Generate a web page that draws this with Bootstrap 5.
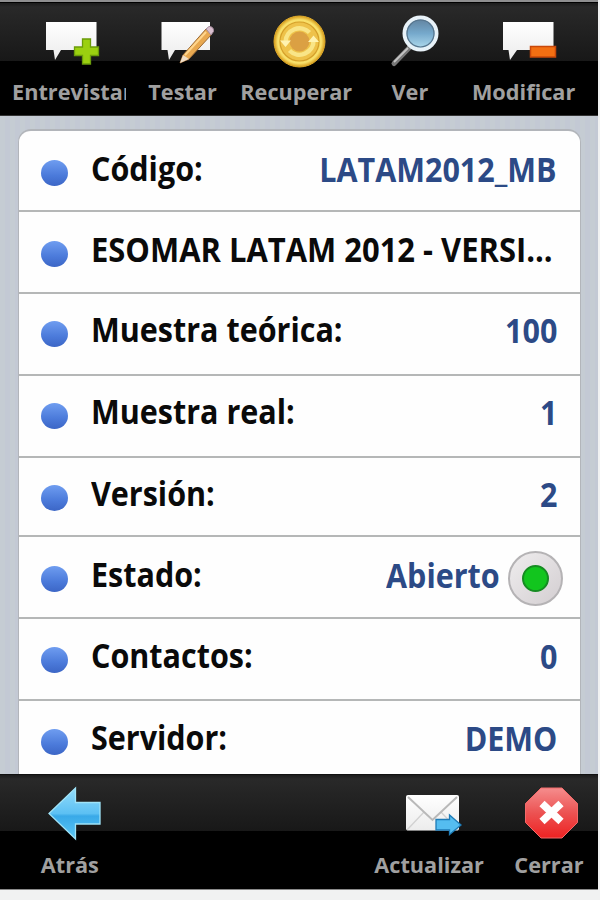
<!DOCTYPE html>
<html lang="es">
<head>
<meta charset="utf-8">
<meta name="viewport" content="width=device-width, initial-scale=1">
<title>LATAM2012_MB</title>
<link href="https://cdn.jsdelivr.net/npm/bootstrap@5.3.0/dist/css/bootstrap.min.css" rel="stylesheet">
<style>
  body { background: #f1f2f2; font-family: "Open Sans", "Noto Sans", sans-serif; font-weight: 700; height: 900px; overflow: hidden; }
  .screen { width: 598px; height: 890px; border-top: 2px solid #8f8f90; border-bottom: 1px solid #8a8a8a; overflow: hidden; }
  .toolbar { flex: none; overflow: hidden; color: #a0a0a0; background: linear-gradient(#1c1c1c, #292929 4px, #181818 var(--split), #000 var(--split)); }
  .toolbar-top { --split: 58px; height: 114px; padding: 8px 0 0 12px; border-top: 1px solid #000; border-bottom: 1px solid #333; }
  .toolbar-bottom { --split: 56px; height: 115px; padding: 6px 0 0 13px; border-top: 1px solid #111; }
  .tool { width: 113.7px; flex: none; overflow: hidden; }
  .tool svg { display: block; width: 114px; height: 60px; flex: none; }
  .tool span { font-size: 21.7px; line-height: 30px; margin-top: 6px; white-space: nowrap; }
  .toolbar-bottom .tool span { margin-top: 9px; }
  .tool-close { width: 98px; }
  .tool-close svg { width: 98px; }
  .first-tool { align-items: flex-start !important; }
  .content { min-height: 0; padding: 13px 17px 0 18px; overflow: hidden; background: repeating-linear-gradient(90deg, #c5ccd3 0 5px, #c3c9d4 5px 10px); }
  .sheet { border: 2px solid #b2b5ba; border-width: 2px 1px 0; border-radius: 13px 13px 0 0; overflow: hidden; background: #fefefe; }
  .field { height: 82px; padding: var(--pt, 20px) 23px 0 22px; border-bottom: 2px solid #b5b7b7; font-size: 34px; line-height: 33px; color: #0a0a0a; white-space: nowrap; }
  .field:nth-child(1) { height: 81px; --pt: 21px; }
  .field:nth-child(2) { --pt: 21px; }
  .field:nth-child(3) { --pt: 19px; }
  .field:nth-child(4) { --pt: 19px; }
  .field:nth-child(5) { height: 79px; --pt: 19px; }
  .field:nth-child(6) { --pt: 21px; }
  .field:nth-child(7) { --pt: 20px; }
  .bullet { width: 27px; height: 26px; margin-top: 8px; border-radius: 50%; background: linear-gradient(#6f9df0, #4b7ada 60%, #3c66c6); flex: none; }
  .field-name, .field-value { display: inline-block; transform: scaleX(.897); }
  .field-name { margin-left: 23px; transform-origin: left; }
  .field-name.long { transform: scaleX(.91); }
  .field-value { transform-origin: right; margin: 1px 0 0 auto; color: #2c4a86; }
  .status-btn { width: 55px; height: 55px; margin: -7px -6px 0 8px; border-radius: 50%; border: 2px solid #b5b3b5; background: linear-gradient(135deg, #efedee, #d3ced1); flex: none; }
  .status-led { width: 27px; height: 27px; border-radius: 50%; border: 2px solid #168c22; background: #12c51e; }
</style>
<script src="https://cdn.jsdelivr.net/npm/bootstrap@5.3.0/dist/js/bootstrap.bundle.min.js"></script>
</head>
<body>
<svg width="0" height="0" class="position-absolute" aria-hidden="true">
  <defs>
    <linearGradient id="paper" x2="0" y2="1"><stop stop-color="#fff"/><stop offset="1" stop-color="#ececec"/></linearGradient>
    <radialGradient id="gold"><stop stop-color="#e9b44a"/><stop offset=".6" stop-color="#f2cb50"/><stop offset=".85" stop-color="#f9e26c"/><stop offset="1" stop-color="#d79a18"/></radialGradient>
    <linearGradient id="lens" x2="0" y2="1"><stop stop-color="#5f7f9b"/><stop offset=".5" stop-color="#76a9cc"/><stop offset="1" stop-color="#b4dff0"/></linearGradient>
    <linearGradient id="sky" x2="0" y2="1"><stop stop-color="#93dcfa"/><stop offset=".5" stop-color="#5cc0f3"/><stop offset=".55" stop-color="#39a9e8"/><stop offset="1" stop-color="#5cc8f6"/></linearGradient>
    <linearGradient id="stop" x2="0" y2="1"><stop stop-color="#f58d8d"/><stop offset=".5" stop-color="#ec5252"/><stop offset="1" stop-color="#ee2222"/></linearGradient>
  </defs>
</svg>
<div class="screen d-flex flex-column">
  <nav class="toolbar toolbar-top d-flex">
    <div class="tool first-tool d-flex flex-column">
      <svg viewBox="0 0 114 60"><path d="M34 11H84.500V39H49L43 49 41.500 39H34Z" fill="url(#paper)"/><path d="M70.500 28h8v8h8v8.500h-8v8.500h-8v-8.500h-8v-8.500h8z" fill="#9bd010" stroke="#6b9c0a" stroke-width="1.300"/></svg>
      <span>Entrevistar</span>
    </div>
    <div class="tool d-flex flex-column align-items-center">
      <svg viewBox="0 0 114 60"><path d="M35.500 11H84V39H49L43 49 41.500 39H35.500Z" fill="url(#paper)"/><path d="M80 18l6 5-23 25-9 4 3-8z" fill="#e8a850" stroke="#9c6a35"/><path d="M59 44L80 21" stroke="#ffd58c" stroke-width="2"/><path d="M57 44l6 4-9 4z" fill="#f1dfc8"/><path d="M80 18l3-2.500q5 0 4.500 5L85 24z" fill="#d9bfcf" stroke="#a48b9c"/></svg>
      <span>Testar</span>
    </div>
    <div class="tool d-flex flex-column align-items-center">
      <svg viewBox="0 0 114 60"><circle cx="60.500" cy="30.500" r="25.500" fill="url(#gold)" stroke="#e0ad2c"/><circle cx="60.500" cy="30.500" r="19.500" fill="#eec24a" stroke="#d5a02a" stroke-width="1.200"/><circle cx="60.500" cy="30.500" r="10" fill="#dba043"/><g fill="none" stroke="#f9e587" stroke-width="4.500"><path d="M46.500 31a14 14 0 0 1 24-9.500M74.500 29a14 14 0 0 1-24 10.500"/></g><path d="M41 29.500h11l-5.500 6.500zM69 31h11l-5.500-6.500z" fill="#fff3b0"/></svg>
      <span>Recuperar</span>
    </div>
    <div class="tool d-flex flex-column align-items-center">
      <svg viewBox="0 0 114 60"><path d="M56 37L41 52.500" stroke="#777" stroke-width="5" stroke-linecap="round"/><path d="M55 37L41 51" stroke="#c4c4c4" stroke-width="1.800"/><circle cx="67.500" cy="22.500" r="16" fill="url(#lens)" stroke="#e8f2f8" stroke-width="4"/><circle cx="67.500" cy="22.500" r="13.500" fill="none" stroke="#56748c" stroke-width="1.200"/></svg>
      <span>Ver</span>
    </div>
    <div class="tool d-flex flex-column align-items-center">
      <svg viewBox="0 0 114 60"><path d="M36 11H86.500V39H50L43 49 41.500 39H36Z" fill="url(#paper)"/><rect x="63.500" y="35.500" width="25" height="10.500" fill="#f36f12" stroke="#c9480a" stroke-width="1.500"/></svg>
      <span>Modificar</span>
    </div>
  </nav>

  <main class="content flex-grow-1">
    <div class="sheet">
      <div class="field d-flex align-items-start"><i class="bullet"></i><span class="field-name">Código:</span><span class="field-value">LATAM2012_MB</span></div>
      <div class="field d-flex align-items-start"><i class="bullet"></i><span class="field-name long">ESOMAR LATAM 2012 - VERSI...</span></div>
      <div class="field d-flex align-items-start"><i class="bullet"></i><span class="field-name">Muestra teórica:</span><span class="field-value">100</span></div>
      <div class="field d-flex align-items-start"><i class="bullet"></i><span class="field-name">Muestra real:</span><span class="field-value">1</span></div>
      <div class="field d-flex align-items-start"><i class="bullet"></i><span class="field-name">Versión:</span><span class="field-value">2</span></div>
      <div class="field d-flex align-items-start"><i class="bullet"></i><span class="field-name">Estado:</span><span class="field-value">Abierto</span><span class="status-btn d-flex align-items-center justify-content-center"><i class="status-led"></i></span></div>
      <div class="field d-flex align-items-start"><i class="bullet"></i><span class="field-name">Contactos:</span><span class="field-value">0</span></div>
      <div class="field d-flex align-items-start"><i class="bullet"></i><span class="field-name">Servidor:</span><span class="field-value">DEMO</span></div>
    </div>
  </main>

  <nav class="toolbar toolbar-bottom d-flex">
    <div class="tool d-flex flex-column align-items-center">
      <svg viewBox="0 0 114 60"><path d="M36 32.500L62.500 7V21.500H87V43H62.500V58Z" fill="url(#sky)" stroke="#9fe3f8" stroke-width="1.300"/></svg>
      <span>Atrás</span>
    </div>
    <div class="tool d-flex flex-column align-items-center ms-auto me-3">
      <svg viewBox="0 0 114 60"><rect x="36" y="14" width="53" height="35.500" rx="2" fill="url(#paper)"/><path d="M37 49l17-18M88 49L71 31" stroke="#d2d2d2" stroke-width="1.300"/><path d="M38 16l24.500 23L87 16" fill="none" stroke="#b9b9b9" stroke-width="2"/><path d="M66 38.500H79.500V34L91 44 79.500 53.500V49H66Z" fill="#55bdf0" stroke="#1e7bb6" stroke-width="1.300"/></svg>
      <span class="ps-1">Actualizar</span>
    </div>
    <div class="tool tool-close d-flex flex-column align-items-center">
      <svg viewBox="0 0 98 60"><path d="M41 7H62L77.500 22.500V41.500L62 57H41L25.500 41.500V22.500Z" fill="url(#stop)" stroke="#f26a6a"/><path d="M42 22.500L61 40.500M61 22.500L42 40.500" stroke="#fff" stroke-width="7.500"/></svg>
      <span>Cerrar</span>
    </div>
  </nav>
</div>
</body>
</html>
